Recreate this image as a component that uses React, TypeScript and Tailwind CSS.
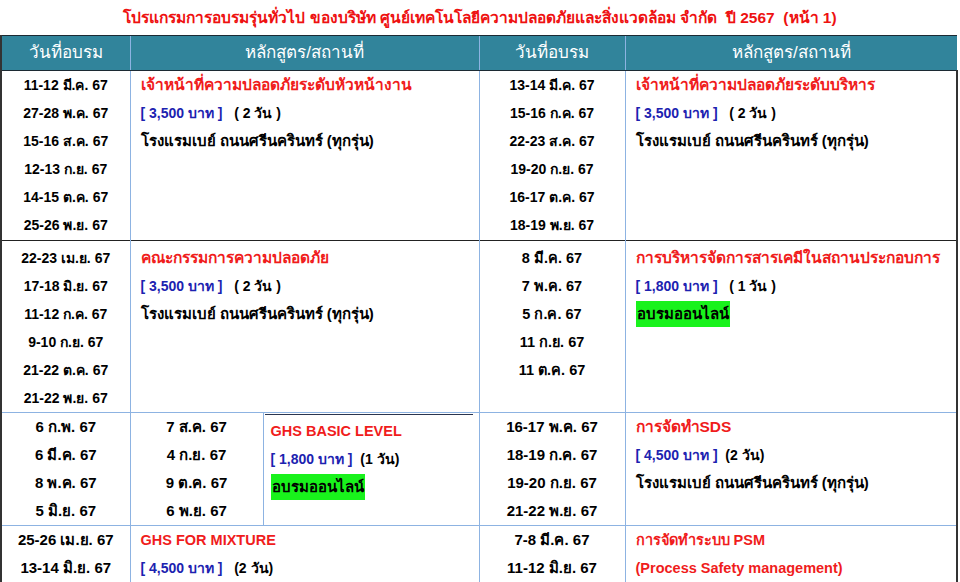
import React from "react";

type Course = {
  title: string;
  price: string;
  days: string;
  venue?: string;
  online?: boolean;
};

const venue = "โรงแรมเบย์ ถนนศรีนครินทร์ (ทุกรุ่น)";

const Dates = ({ items, size = "text-[14px]" }: { items: string[]; size?: string }) => (
  <div className={`flex flex-col items-center font-bold text-black ${size}`}>
    {items.map((d, i) => (
      <div key={i} className="h-[28px] leading-[28px] whitespace-nowrap">
        {d}
      </div>
    ))}
  </div>
);

const Online = () => (
  <div className="h-[28px] flex items-center">
    <span className="bg-[#19f21c] px-[1px] h-[26px] leading-[26px] text-[15px] font-bold text-black">อบรมออนไลน์</span>
  </div>
);

const CourseInfo = ({ c }: { c: Course }) => (
  <div className="flex flex-col pl-[10px]">
    <div className="h-[28px] leading-[28px] text-[15.5px] font-bold text-[#f01c1c] whitespace-nowrap">{c.title}</div>
    <div className="h-[28px] leading-[28px] text-[14px] font-bold whitespace-nowrap">
      <span className="text-[#1c22b0]">{c.price}</span>
      <span className="text-black">{c.days}</span>
    </div>
    {c.venue && (
      <div className="h-[28px] leading-[28px] text-[15px] font-bold text-black whitespace-nowrap">{c.venue}</div>
    )}
    {c.online && <Online />}
  </div>
);

export default function App() {
  const th = "h-[35px] bg-[#31849b] text-white text-[17px] font-normal text-center border-y border-y-[#1c2a33]";
  return (
    <div className="w-[960px] h-[582px] overflow-hidden bg-white" style={{ fontFamily: '"Liberation Sans", "Noto Sans", "DejaVu Sans", sans-serif' }}>
      <div className="h-[35px] flex items-center justify-center text-[15.5px] font-bold text-[#ee1111]">
        โปรแกรมการอบรมรุ่นทั่วไป ของบริษัท ศูนย์เทคโนโลยีความปลอดภัยและสิ่งแวดล้อม จำกัด&nbsp; ปี 2567&nbsp; (หน้า 1)
      </div>
      <table className="table-fixed border-collapse w-[956px]">
        <colgroup>
          <col className="w-[129px]" />
          <col className="w-[133px]" />
          <col className="w-[216px]" />
          <col className="w-[146px]" />
          <col className="w-[332px]" />
        </colgroup>
        <thead>
          <tr>
            <th className={`${th} border-l-2 border-l-[#333]`}>วันที่อบรม</th>
            <th colSpan={2} className={`${th} border-l border-l-[#8db3e2]`}>หลักสูตร/สถานที่</th>
            <th className={`${th} border-l border-l-[#8db3e2]`}>วันที่อบรม</th>
            <th className={`${th} border-l border-l-[#8db3e2] border-r-0`}>หลักสูตร/สถานที่</th>
          </tr>
        </thead>
        <tbody className="align-top">
          <tr className="h-[170px] border-b border-b-[#222]">
            <td className="border-l-2 border-l-[#333] pt-0">
              <Dates items={["11-12 มี.ค. 67", "27-28 พ.ค. 67", "15-16 ส.ค. 67", "12-13 ก.ย. 67", "14-15 ต.ค. 67", "25-26 พ.ย. 67"]} />
            </td>
            <td colSpan={2} className="border-l border-l-[#8db3e2]">
              <CourseInfo c={{ title: "เจ้าหน้าที่ความปลอดภัยระดับหัวหน้างาน", price: "[ 3,500 บาท ]", days: "\u00a0\u00a0 ( 2 วัน )", venue }} />
            </td>
            <td className="border-l border-l-[#8db3e2]">
              <Dates items={["13-14 มี.ค. 67", "15-16 ก.ค. 67", "22-23 ส.ค. 67", "19-20 ก.ย. 67", "16-17 ต.ค. 67", "18-19 พ.ย. 67"]} />
            </td>
            <td className="border-l border-l-[#8db3e2] border-r-2 border-r-[#333]">
              <CourseInfo c={{ title: "เจ้าหน้าที่ความปลอดภัยระดับบริหาร", price: "[ 3,500 บาท ]", days: "\u00a0\u00a0 ( 2 วัน )", venue }} />
            </td>
          </tr>
          <tr className="h-[169px] border-b border-b-[#8db3e2]">
            <td className="border-l-2 border-l-[#333] pt-[3px]">
              <Dates items={["22-23 เม.ย. 67", "17-18 มิ.ย. 67", "11-12 ก.ค. 67", "9-10 ก.ย. 67", "21-22 ต.ค. 67", "21-22 พ.ย. 67"]} />
            </td>
            <td colSpan={2} className="border-l border-l-[#8db3e2] pt-[3px]">
              <CourseInfo c={{ title: "คณะกรรมการความปลอดภัย", price: "[ 3,500 บาท ]", days: "\u00a0\u00a0 ( 2 วัน )", venue }} />
            </td>
            <td className="border-l border-l-[#8db3e2] pt-[3px]">
              <Dates size="text-[14.5px]" items={["8 มี.ค. 67", "7 พ.ค. 67", "5 ก.ค. 67", "11 ก.ย. 67", "11 ต.ค. 67"]} />
            </td>
            <td className="border-l border-l-[#8db3e2] border-r-2 border-r-[#333] pt-[3px]">
              <CourseInfo c={{ title: "การบริหารจัดการสารเคมีในสถานประกอบการ", price: "[ 1,800 บาท ]", days: "\u00a0\u00a0 ( 1 วัน )", online: true }} />
            </td>
          </tr>
          <tr className="h-[113px] border-b border-b-[#8db3e2]">
            <td className="border-l-2 border-l-[#333] pt-0">
              <Dates size="text-[15px]" items={["6 ก.พ. 67", "6 มี.ค. 67", "8 พ.ค. 67", "5 มิ.ย. 67"]} />
            </td>
            <td className="border-l border-l-[#8db3e2] pt-0">
              <Dates size="text-[15px]" items={["7 ส.ค. 67", "4 ก.ย. 67", "9 ต.ค. 67", "6 พ.ย. 67"]} />
            </td>
            <td className="border-l border-l-[#8db3e2] pt-[1px]">
              <div className="ml-[1px] mr-[6px] border-t border-t-[#2a3550] pt-[2px]">
                <div className="flex flex-col pl-[6px]">
                  <div className="h-[28px] leading-[28px] text-[14.5px] font-bold text-[#f01c1c]">GHS BASIC LEVEL</div>
                  <div className="h-[28px] leading-[28px] text-[14px] font-bold whitespace-nowrap">
                    <span className="text-[#1c22b0]">[ 1,800 บาท ]</span>
                    <span className="text-black">&nbsp; (1 วัน)</span>
                  </div>
                  <Online />
                </div>
              </div>
            </td>
            <td className="border-l border-l-[#8db3e2] pt-0">
              <Dates size="text-[15px]" items={["16-17 พ.ค. 67", "18-19 ก.ค. 67", "19-20 ก.ย. 67", "21-22 พ.ย. 67"]} />
            </td>
            <td className="border-l border-l-[#8db3e2] border-r-2 border-r-[#333] pt-0">
              <CourseInfo c={{ title: "การจัดทำSDS", price: "[ 4,500 บาท ]", days: "\u00a0 (2 วัน)", venue }} />
            </td>
          </tr>
          <tr className="h-[60px]">
            <td className="border-l-2 border-l-[#333] pt-0">
              <Dates size="text-[15px]" items={["25-26 เม.ย. 67", "13-14 มิ.ย. 67"]} />
            </td>
            <td colSpan={2} className="border-l border-l-[#8db3e2] pt-0">
              <div className="flex flex-col pl-[10px]">
                <div className="h-[28px] leading-[28px] text-[14.5px] font-bold text-[#f01c1c]">GHS FOR MIXTURE</div>
                <div className="h-[28px] leading-[28px] text-[14px] font-bold whitespace-nowrap">
                  <span className="text-[#1c22b0]">[ 4,500 บาท ]</span>
                  <span className="text-black">&nbsp;&nbsp; (2 วัน)</span>
                </div>
              </div>
            </td>
            <td className="border-l border-l-[#8db3e2] pt-0">
              <Dates size="text-[15px]" items={["7-8 มี.ค. 67", "11-12 มิ.ย. 67"]} />
            </td>
            <td className="border-l border-l-[#8db3e2] border-r-2 border-r-[#333] pt-0">
              <div className="flex flex-col pl-[10px]">
                <div className="h-[28px] leading-[28px] text-[14.5px] font-bold text-[#f01c1c]">การจัดทำระบบ PSM</div>
                <div className="h-[28px] leading-[28px] text-[14.5px] font-bold text-[#f01c1c]">(Process Safety management)</div>
              </div>
            </td>
          </tr>
        </tbody>
      </table>
    </div>
  );
}
